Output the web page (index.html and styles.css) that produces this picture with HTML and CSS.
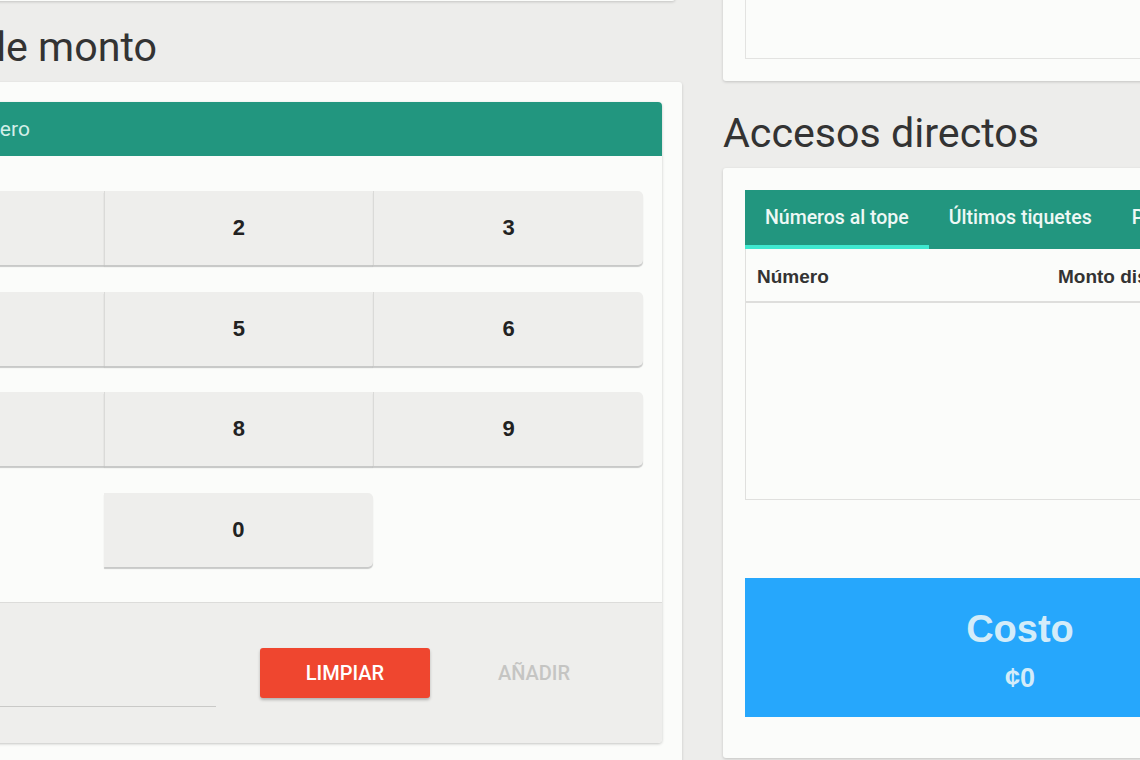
FILE: index.html
```html
<!DOCTYPE html>
<html lang="es">
<head>
<meta charset="utf-8">
<title>Venta</title>
<link rel="stylesheet" href="styles.css">
</head>
<body>
<div class="page">
  <div class="col">
    <div class="card stub stub-left"></div>
    <h2 class="heading heading-left">Selección de monto</h2>
    <div class="card main-card">
      <div class="panel">
        <div class="panel-head">Seleccione un número</div>
        <div class="panel-body">
          <div class="keys">
            <button class="key">1</button><button class="key">2</button><button class="key">3</button>
          </div>
          <div class="keys">
            <button class="key">4</button><button class="key">5</button><button class="key">6</button>
          </div>
          <div class="keys">
            <button class="key">7</button><button class="key">8</button><button class="key">9</button>
          </div>
          <div class="keys keys-single">
            <button class="key key-zero">0</button>
          </div>
        </div>
        <div class="panel-foot">
          <div class="field"></div>
          <button class="btn btn-clear">Limpiar</button>
          <button class="btn btn-add" disabled>Añadir</button>
        </div>
      </div>
    </div>
  </div>
  <div class="col">
    <div class="card stub stub-right"><div class="textbox"></div></div>
    <h2 class="heading">Accesos directos</h2>
    <div class="card shortcuts">
      <div class="tabs">
        <div class="tab active">Números al tope</div>
        <div class="tab">Últimos tiquetes</div>
        <div class="tab">Premios</div>
      </div>
      <div class="table">
        <div class="thead">
          <div class="th">Número</div>
          <div class="th">Monto disponible</div>
        </div>
      </div>
      <div class="cost">
        <div class="cost-title">Costo</div>
        <div class="cost-value">¢0</div>
      </div>
    </div>
  </div>
</div>
</body>
</html>
```
FILE: styles.css
```css
* { box-sizing: border-box; }

html, body {
  margin: 0;
  height: 100%;
}

body {
  background: #ededeb;
  font-family: "Liberation Sans", Arial, sans-serif;
  overflow: hidden;
}

.page {
  display: grid;
  grid-template-columns: 887px 594px;
  column-gap: 41px;
  margin-left: -205px;
  margin-top: -100px;
  align-items: start;
}

.card {
  background: #fbfcfa;
  border-radius: 3px;
  box-shadow: 0 1px 3px rgba(0, 0, 0, 0.18);
}

.stub-left {
  height: 101px;
  margin-right: 7px;
}

.stub-right {
  padding: 0 22px 22px;
}

.textbox {
  height: 159px;
  border: 1px solid #e3e3e1;
}

.heading {
  font-family: Roboto, "Liberation Sans", sans-serif;
  font-weight: 400;
  font-size: 41.2px;
  line-height: 50px;
  color: #333;
  margin: 27px 0 10px;
  white-space: nowrap;
}

.heading-left {
  margin-top: 21px;
}

/* left card */
.main-card {
  padding: 20px;
  height: 700px;
}

.panel {
  background: #fbfcfa;
  border-radius: 4px;
  box-shadow: 0 1px 3px rgba(0, 0, 0, 0.22);
  overflow: hidden;
}

.panel-head {
  height: 54px;
  background: #22967f;
  color: #d3efe8;
  font-family: Roboto, "Liberation Sans", sans-serif;
  font-size: 21px;
  padding-left: 8px;
  display: flex;
  align-items: center;
  white-space: nowrap;
}

.panel-body {
  padding: 35px 19px;
  display: flex;
  flex-direction: column;
  gap: 26.5px;
}

.keys {
  display: grid;
  grid-template-columns: repeat(3, 1fr);
}

.key {
  height: 74px;
  margin: 0;
  border: 0;
  border-left: 1px solid #dadad8;
  background: #eeeeec;
  box-shadow: 0 2px 1px rgba(0, 0, 0, 0.2);
  font-family: "Liberation Sans", Arial, sans-serif;
  font-weight: 700;
  font-size: 22px;
  color: #222;
  padding: 0;
}

.keys .key:first-child {
  border-left: 0;
  border-radius: 5px 0 0 5px;
}

.keys .key:last-child {
  border-radius: 0 5px 5px 0;
}

.keys-single .key-zero {
  grid-column: 2;
  border-left: 0;
  border-radius: 5px;
}

.panel-foot {
  height: 141px;
  border-top: 1px solid #dcdcda;
  background: #eeeeec;
  display: flex;
  align-items: center;
  padding: 0 58px 0 20px;
}

.field {
  flex: 1;
  height: 1px;
  background: #c9c9c7;
  margin-top: 67px;
}

.btn {
  border: 0;
  margin: 0;
  padding: 0;
  height: 50px;
  font-family: Roboto, "Liberation Sans", sans-serif;
  font-weight: 500;
  font-size: 20px;
  text-transform: uppercase;
}

.btn-clear {
  width: 170px;
  margin-left: 44px;
  background: #ef462f;
  color: #fff;
  border-radius: 3px;
  box-shadow: 0 2px 3px rgba(0, 0, 0, 0.25);
}

.btn-add {
  width: 140px;
  margin-left: 34px;
  background: transparent;
  color: #c5c5c3;
}

/* right card */
.shortcuts {
  padding: 22px 22px 41px;
}

.tabs {
  display: flex;
  height: 59px;
  background: #22967f;
  overflow: hidden;
}

.tab {
  padding: 0 20px;
  display: flex;
  align-items: center;
  border-bottom: 4px solid transparent;
  color: #eef8f5;
  font-family: Roboto, "Liberation Sans", sans-serif;
  font-weight: 500;
  font-size: 19.5px;
  white-space: nowrap;
}

.tab.active {
  border-bottom-color: #3fe8cf;
}

.table {
  height: 251px;
  border: 1px solid #e0e0de;
  border-top: 0;
}

.thead {
  display: grid;
  grid-template-columns: 301px 1fr;
  height: 54px;
  padding-top: 3px;
  align-items: center;
  border-bottom: 2px solid #dededc;
}

.th {
  padding-left: 11px;
  font-weight: 700;
  font-size: 19px;
  color: #333;
  white-space: nowrap;
}

.cost {
  margin-top: 78px;
  height: 139px;
  background: #26a7fc;
  color: #d3ecf9;
  text-align: center;
  padding-top: 30px;
}

.cost-title {
  font-weight: 700;
  font-size: 38px;
  line-height: 42px;
}

.cost-value {
  margin-top: 12px;
  font-weight: 700;
  font-size: 27px;
  line-height: 32px;
}
```
